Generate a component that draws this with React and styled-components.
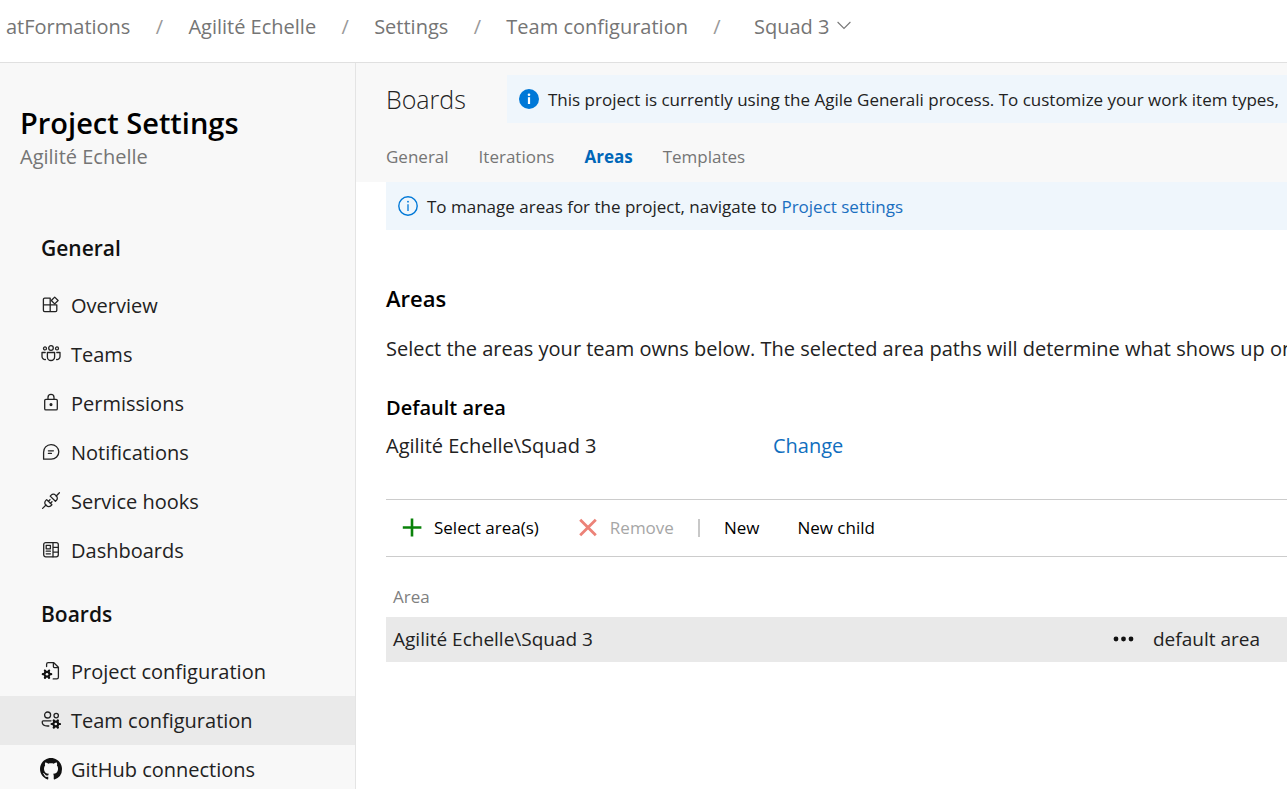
import styled, { createGlobalStyle, css } from "styled-components";


const navGroups = [
    {
        title: "General",
        items: [
            { text: "Overview", icon: OverviewIcon },
            { text: "Teams", icon: TeamsIcon },
            { text: "Permissions", icon: LockIcon },
            { text: "Notifications", icon: ChatIcon },
            { text: "Service hooks", icon: PlugIcon },
            { text: "Dashboards", icon: DashboardIcon },
        ],
    },
    {
        title: "Boards",
        items: [
            { text: "Project configuration", icon: FileGearIcon },
            { text: "Team configuration", icon: TeamGearIcon, selected: true },
            { text: "GitHub connections", icon: GithubIcon },
        ],
    },
];

const crumbs = ["atFormations", "Agilité Echelle", "Settings", "Team configuration"];
const tabs = ["General", "Iterations", "Areas", "Templates"];


export default function App() {

    return (
        <Page>
            <GlobalStyle />
            <TopBar>
                {crumbs.map((crumb) => (
                    <Crumb key={crumb}>
                        <a href="#">{crumb}</a>
                        <Slash aria-hidden="true">/</Slash>
                    </Crumb>
                ))}
                <TeamButton type="button">
                    Squad 3
                    <ChevronIcon />
                </TeamButton>
            </TopBar>

            <Body>
                <Sidebar>
                    <SidebarTitle>Project Settings</SidebarTitle>
                    <SidebarSub>Agilité Echelle</SidebarSub>
                    {navGroups.map((group) => (
                        <NavGroup key={group.title}>
                            <NavHeading>{group.title}</NavHeading>
                            {group.items.map(({ text, icon: Icon, selected }) => (
                                <NavLink key={text} href="#" $selected={selected}>
                                    <NavIcon><Icon /></NavIcon>
                                    {text}
                                </NavLink>
                            ))}
                        </NavGroup>
                    ))}
                </Sidebar>

                <Main>
                    <Hub>
                        <HubTop>
                            <HubTitle>Boards</HubTitle>
                            <Message $grow>
                                <InfoIcon filled />
                                <span>This project is currently using the Agile Generali process. To customize your work item types,</span>
                            </Message>
                        </HubTop>
                        <Tabs>
                            {tabs.map((tab) => (
                                <Tab key={tab} href="#" $active={tab === "Areas"}>{tab}</Tab>
                            ))}
                        </Tabs>
                    </Hub>

                    <Content>
                        <Message>
                            <InfoIcon />
                            <span>To manage areas for the project, navigate to <MessageLink href="#">Project settings</MessageLink></span>
                        </Message>

                        <SectionTitle>Areas</SectionTitle>
                        <Description>Select the areas your team owns below. The selected area paths will determine what shows up on</Description>
                        <SubTitle>Default area</SubTitle>
                        <DefaultArea>
                            <AreaPath>Agilité Echelle\Squad 3</AreaPath>
                            <ChangeLink href="#">Change</ChangeLink>
                        </DefaultArea>

                        <Toolbar>
                            <ToolButton type="button">
                                <PlusIcon />
                                Select area(s)
                            </ToolButton>
                            <ToolButton type="button" disabled>
                                <RemoveIcon />
                                Remove
                            </ToolButton>
                            <Divider />
                            <ToolButton type="button">New</ToolButton>
                            <ToolButton type="button">New child</ToolButton>
                        </Toolbar>

                        <AreaTable>
                            <thead>
                                <tr>
                                    <HeadCell colSpan={3}>Area</HeadCell>
                                </tr>
                            </thead>
                            <tbody>
                                <AreaRow>
                                    <Cell>Agilité Echelle\Squad 3</Cell>
                                    <MenuCell>
                                        <MoreButton type="button" aria-label="More actions">
                                            <DotsIcon />
                                        </MoreButton>
                                    </MenuCell>
                                    <TagCell>default area</TagCell>
                                </AreaRow>
                            </tbody>
                        </AreaTable>
                    </Content>
                </Main>
            </Body>
        </Page>
    );
}


//icons
function ChevronIcon() {
    return (
        <svg width="14" height="12" viewBox="0 0 14 12" fill="none" stroke="#777" strokeWidth="1.1">
            <path d="M.6 1 7 7.4 13.4 1" />
        </svg>
    );
}

function InfoIcon({ filled }) {
    const mark = filled ? "#fff" : "#0078d7";
    return (
        <svg width="20" height="22" viewBox="0 0 20 22" fill="none">
            <circle cx="10" cy="10" r={filled ? 10 : 9.2} fill={filled ? "#0078d7" : "none"} stroke={filled ? "none" : "#0078d7"} strokeWidth="1.4" />
            <circle cx="10" cy="5.7" r={filled ? 1.3 : 0.9} fill={mark} />
            <path d="M10 8.2v6.8" stroke={mark} strokeWidth={filled ? 2.2 : 1.3} />
        </svg>
    );
}

function PlusIcon() {
    return (
        <svg width="22" height="22" viewBox="0 0 22 22" stroke="#0a820a" strokeWidth="2.6">
            <path d="M11 1.5v18M1.8 10.5h18.6" />
        </svg>
    );
}

function RemoveIcon() {
    return (
        <svg width="22" height="22" viewBox="0 0 22 22" stroke="#ec8278" strokeWidth="2.8">
            <path d="m3.2 2.7 15.6 15.6M18.8 2.7 3.2 18.3" />
        </svg>
    );
}

function DotsIcon() {
    return (
        <svg width="22" height="6" viewBox="0 0 22 6" fill="#111">
            <circle cx="3" cy="3" r="2.4" />
            <circle cx="10.5" cy="3" r="2.4" />
            <circle cx="18" cy="3" r="2.4" />
        </svg>
    );
}

function LineIcon({ children }) {
    return (
        <svg width="20" height="20" viewBox="0 0 20 20" fill="none" stroke="#222" strokeWidth="1.3" strokeLinejoin="round" strokeLinecap="round">
            {children}
        </svg>
    );
}

function OverviewIcon() {
    return (
        <LineIcon>
            <path d="M9.2 3.2H3.7a1.3 1.3 0 0 0-1.3 1.3v10.8c0 .7.6 1.3 1.3 1.3h10.8c.7 0 1.3-.6 1.3-1.3V9.9H2.4M9.2 3.2v13.4" />
            <path d="m13.7 2.1 3.4 3.4-3.4 3.4-3.4-3.4z" />
        </LineIcon>
    );
}

function TeamsIcon() {
    return (
        <LineIcon>
            <circle cx="10" cy="4" r="2.3" />
            <circle cx="4" cy="4.4" r="1.5" />
            <circle cx="16" cy="4.4" r="1.5" />
            <path d="M6.4 8.5h7.2v4.4a3.6 3.6 0 0 1-7.2 0zM4.2 8.5H1v4a3 3 0 0 0 3.4 3M15.8 8.5H19v4a3 3 0 0 1-3.4 3" />
        </LineIcon>
    );
}

function LockIcon() {
    return (
        <LineIcon>
            <rect x="3.7" y="6.3" width="12.6" height="10.6" rx="1.2" />
            <path d="M7 6.3V4.4a3 3 0 0 1 6 0v1.9" />
            <circle cx="10" cy="11.6" r=".9" fill="#222" />
        </LineIcon>
    );
}

function ChatIcon() {
    return (
        <LineIcon>
            <path d="M2.6 17.2v-7a7.6 7.3 0 1 1 7.6 7z" />
            <path d="M7.4 8.8h5M7.4 11.4h3" />
        </LineIcon>
    );
}

function PlugIcon() {
    return (
        <LineIcon>
            <path d="m1.6 17.4 3.4-3.4M15.2 5l3.2-3.2" />
            <path d="m5.7 8.6 5.2 5.2-1 1a3 3 0 0 1-4.3 0l-.9-.9a3 3 0 0 1 0-4.3z" />
            <path d="m9.2 5.1 5.2 5.2 1-1a3 3 0 0 0 0-4.3l-.9-.9a3 3 0 0 0-4.3 0z" />
            <path d="m7.4 10.3 1.6-1.6M9.4 12.3l1.6-1.6" />
        </LineIcon>
    );
}

function DashboardIcon() {
    return (
        <LineIcon>
            <rect x="2.7" y="2.6" width="14.6" height="14.2" rx="2" />
            <path d="M12 2.6v14.2M12 7.4h5.3M12 12.1h5.3M5.2 5.4h4.2v3.4H5.2zM5.2 11.2h4.2M5.2 13.8h4.2" />
        </LineIcon>
    );
}

function Gear({ x, y }) {
    const teeth = [0, 60, 120];
    return (
        <g transform={`translate(${x} ${y})`}>
            {teeth.map((angle) => (
                <path key={angle} d="M-4.2 0h8.4" transform={`rotate(${angle})`} stroke="#111" strokeWidth="2.2" />
            ))}
            <circle r="3.4" fill="#111" stroke="none" />
            <circle r="1.3" fill="#f4f4f4" stroke="none" />
        </g>
    );
}

function FileGearIcon() {
    return (
        <LineIcon>
            <path d="M5.6 5.6V3.3c0-1 .6-1.6 1.6-1.6h5.6l4.6 4.6v10c0 1-.6 1.6-1.6 1.6h-3.6" />
            <path d="M12.4 1.9v3.7c0 .6.4 1 1 1h3.8" />
            <Gear x={6} y={13.2} />
        </LineIcon>
    );
}

function TeamGearIcon() {
    return (
        <LineIcon>
            <circle cx="6.6" cy="5" r="3" />
            <circle cx="15.2" cy="5.6" r="2.2" />
            <path d="M10 10.8H2.2c-.8 0-1 .6-1 1.2 0 2.2 2 4 5.4 4h1.2" />
            <Gear x={14.8} y={14} />
        </LineIcon>
    );
}

function GithubIcon() {
    return (
        <svg width="22" height="22" viewBox="0 0 16 16" fill="#111">
            <path d="M8 0C3.58 0 0 3.58 0 8c0 3.54 2.29 6.53 5.47 7.59.4.07.55-.17.55-.38 0-.19-.01-.82-.01-1.49-2.01.37-2.53-.49-2.69-.94-.09-.23-.48-.94-.82-1.13-.28-.15-.68-.52-.01-.53.63-.01 1.08.58 1.23.82.72 1.21 1.87.87 2.33.66.07-.52.28-.87.51-1.07-1.78-.2-3.64-.89-3.64-3.95 0-.87.31-1.59.82-2.15-.08-.2-.36-1.02.08-2.12 0 0 .67-.21 2.2.82.64-.18 1.32-.27 2-.27s1.36.09 2 .27c1.53-1.04 2.2-.82 2.2-.82.44 1.1.16 1.92.08 2.12.51.56.82 1.27.82 2.15 0 3.07-1.87 3.75-3.65 3.95.29.25.54.73.54 1.48 0 1.07-.01 1.93-.01 2.2 0 .21.15.46.55.38A8.01 8.01 0 0 0 16 8c0-4.42-3.58-8-8-8z" />
        </svg>
    );
}


const GlobalStyle = createGlobalStyle`
    * {
        box-sizing: border-box;
    }

    body {
        margin: 0;
        background: #fff;
        color: #222;
        font-family: "Open Sans", "Noto Sans", sans-serif;
        font-size: 20px;
        line-height: 28px;
    }

    a {
        color: inherit;
        text-decoration: none;
    }

    button {
        padding: 0;
        border: 0;
        background: none;
        color: inherit;
        font: inherit;
    }

    svg {
        flex-shrink: 0;
    }
`

const Page = styled.div`
    display: flex;
    flex-direction: column;
    height: 100vh;
    overflow: hidden;
`

const TopBar = styled.nav`
    display: flex;
    align-items: center;
    flex-shrink: 0;
    height: 63px;
    padding: 0 6px 8px;
    border-bottom: 1px solid #e0e0e0;
    color: #757575;
    white-space: nowrap;
`

const Crumb = styled.span`
    display: flex;
`

const Slash = styled.span`
    width: 58px;
    text-align: center;
    color: #999;
`

const TeamButton = styled.button`
    display: flex;
    align-items: center;
    gap: 8px;
    margin-left: 8px;
`

const Body = styled.div`
    display: flex;
    flex: 1;
    min-height: 0;
`

const Sidebar = styled.aside`
    flex: 0 0 356px;
    overflow: hidden;
    border-right: 1px solid #e4e4e4;
    background: #f8f8f8;
`

const SidebarTitle = styled.h1`
    margin: 39px 20px 0;
    color: #000;
    font-size: 29px;
    font-weight: 600;
    line-height: 41px;
`

const SidebarSub = styled.p`
    margin: 0 20px 47px;
    color: #757575;
`

const NavGroup = styled.section`
    display: flex;
    flex-direction: column;
`

const NavHeading = styled.h2`
    margin: 0;
    padding: 16px 41px 19px;
    color: #111;
    font-size: 21px;
    font-weight: 600;
    line-height: 28px;

    ${NavGroup} + ${NavGroup} & {
        padding-top: 25px;
    }
`

const NavLink = styled.a`
    display: flex;
    align-items: center;
    gap: 9px;
    height: 49px;
    padding-left: 40px;
    background: ${(props) => (props.$selected ? "#eaeaea" : "transparent")};
`

const NavIcon = styled.span`
    display: flex;
    justify-content: center;
    width: 22px;
    padding-bottom: 2px;
`

const Main = styled.main`
    flex: 1;
    min-width: 0;
`

const Hub = styled.header`
    height: 119px;
    padding: 12px 0 0 30px;
    background: #f8f8f8;
`

const HubTop = styled.div`
    display: flex;
    align-items: center;
`

const HubTitle = styled.h2`
    flex: 0 0 121px;
    margin: 0;
    font-size: 25px;
    font-weight: 300;
    line-height: 36px;
`

const Message = styled.div`
    display: flex;
    align-items: center;
    gap: 9px;
    height: 48px;
    padding: 1px 0 0 12px;
    overflow: hidden;
    background: #eff6fc;
    font-size: 17px;
    white-space: nowrap;

    ${(props) => props.$grow && css`
        flex: 1;
        min-width: 0;
    `}
`

const MessageLink = styled.a`
    color: #1a6fc0;
`

const Tabs = styled.nav`
    display: flex;
    gap: 30px;
    margin-top: 20px;
`

const Tab = styled.a`
    color: ${(props) => (props.$active ? "#0067b8" : "#757575")};
    font-size: 17px;
    font-weight: ${(props) => (props.$active ? 700 : 400)};
`

const Content = styled.div`
    padding-left: 30px;
`

const SectionTitle = styled.h3`
    margin: 54px 0 0;
    color: #000;
    font-size: 22px;
    font-weight: 600;
    line-height: 28px;
`

const Description = styled.p`
    margin: 23px 0 0;
    overflow: hidden;
    white-space: nowrap;
`

const SubTitle = styled.h4`
    margin: 31px 0 0;
    color: #000;
    font-size: 20px;
    font-weight: 600;
`

const DefaultArea = styled.div`
    display: flex;
    margin-top: 10px;
`

const AreaPath = styled.span`
    flex: 0 0 387px;
`

const ChangeLink = styled.a`
    color: #106ebe;
`

const Toolbar = styled.div`
    display: flex;
    align-items: center;
    gap: 38px;
    height: 58px;
    margin-top: 39px;
    padding-left: 15px;
    border-top: 1px solid #ccc;
    border-bottom: 1px solid #ccc;
`

const ToolButton = styled.button`
    display: flex;
    align-items: center;
    gap: 11px;
    color: #000;
    font-size: 17px;

    &:disabled {
        color: #a6a6a6;
    }
`

const Divider = styled.span`
    width: 2px;
    height: 18px;
    margin: 0 -14px;
    background: #c8c8c8;
`

const AreaTable = styled.table`
    width: 100%;
    margin-top: 26px;
    border-collapse: collapse;
`

const HeadCell = styled.th`
    height: 34px;
    padding: 0 7px 6px;
    color: #808080;
    font-size: 17px;
    font-weight: 400;
    text-align: left;
`

const AreaRow = styled.tr`
    background: #e9e9e9;
`

const Cell = styled.td`
    height: 45px;
    padding: 0 7px 2px;
    font-size: 19px;
`

const MenuCell = styled(Cell)`
    width: 40px;
`

const TagCell = styled(Cell)`
    width: 141px;
`

const MoreButton = styled.button`
    display: flex;
`
